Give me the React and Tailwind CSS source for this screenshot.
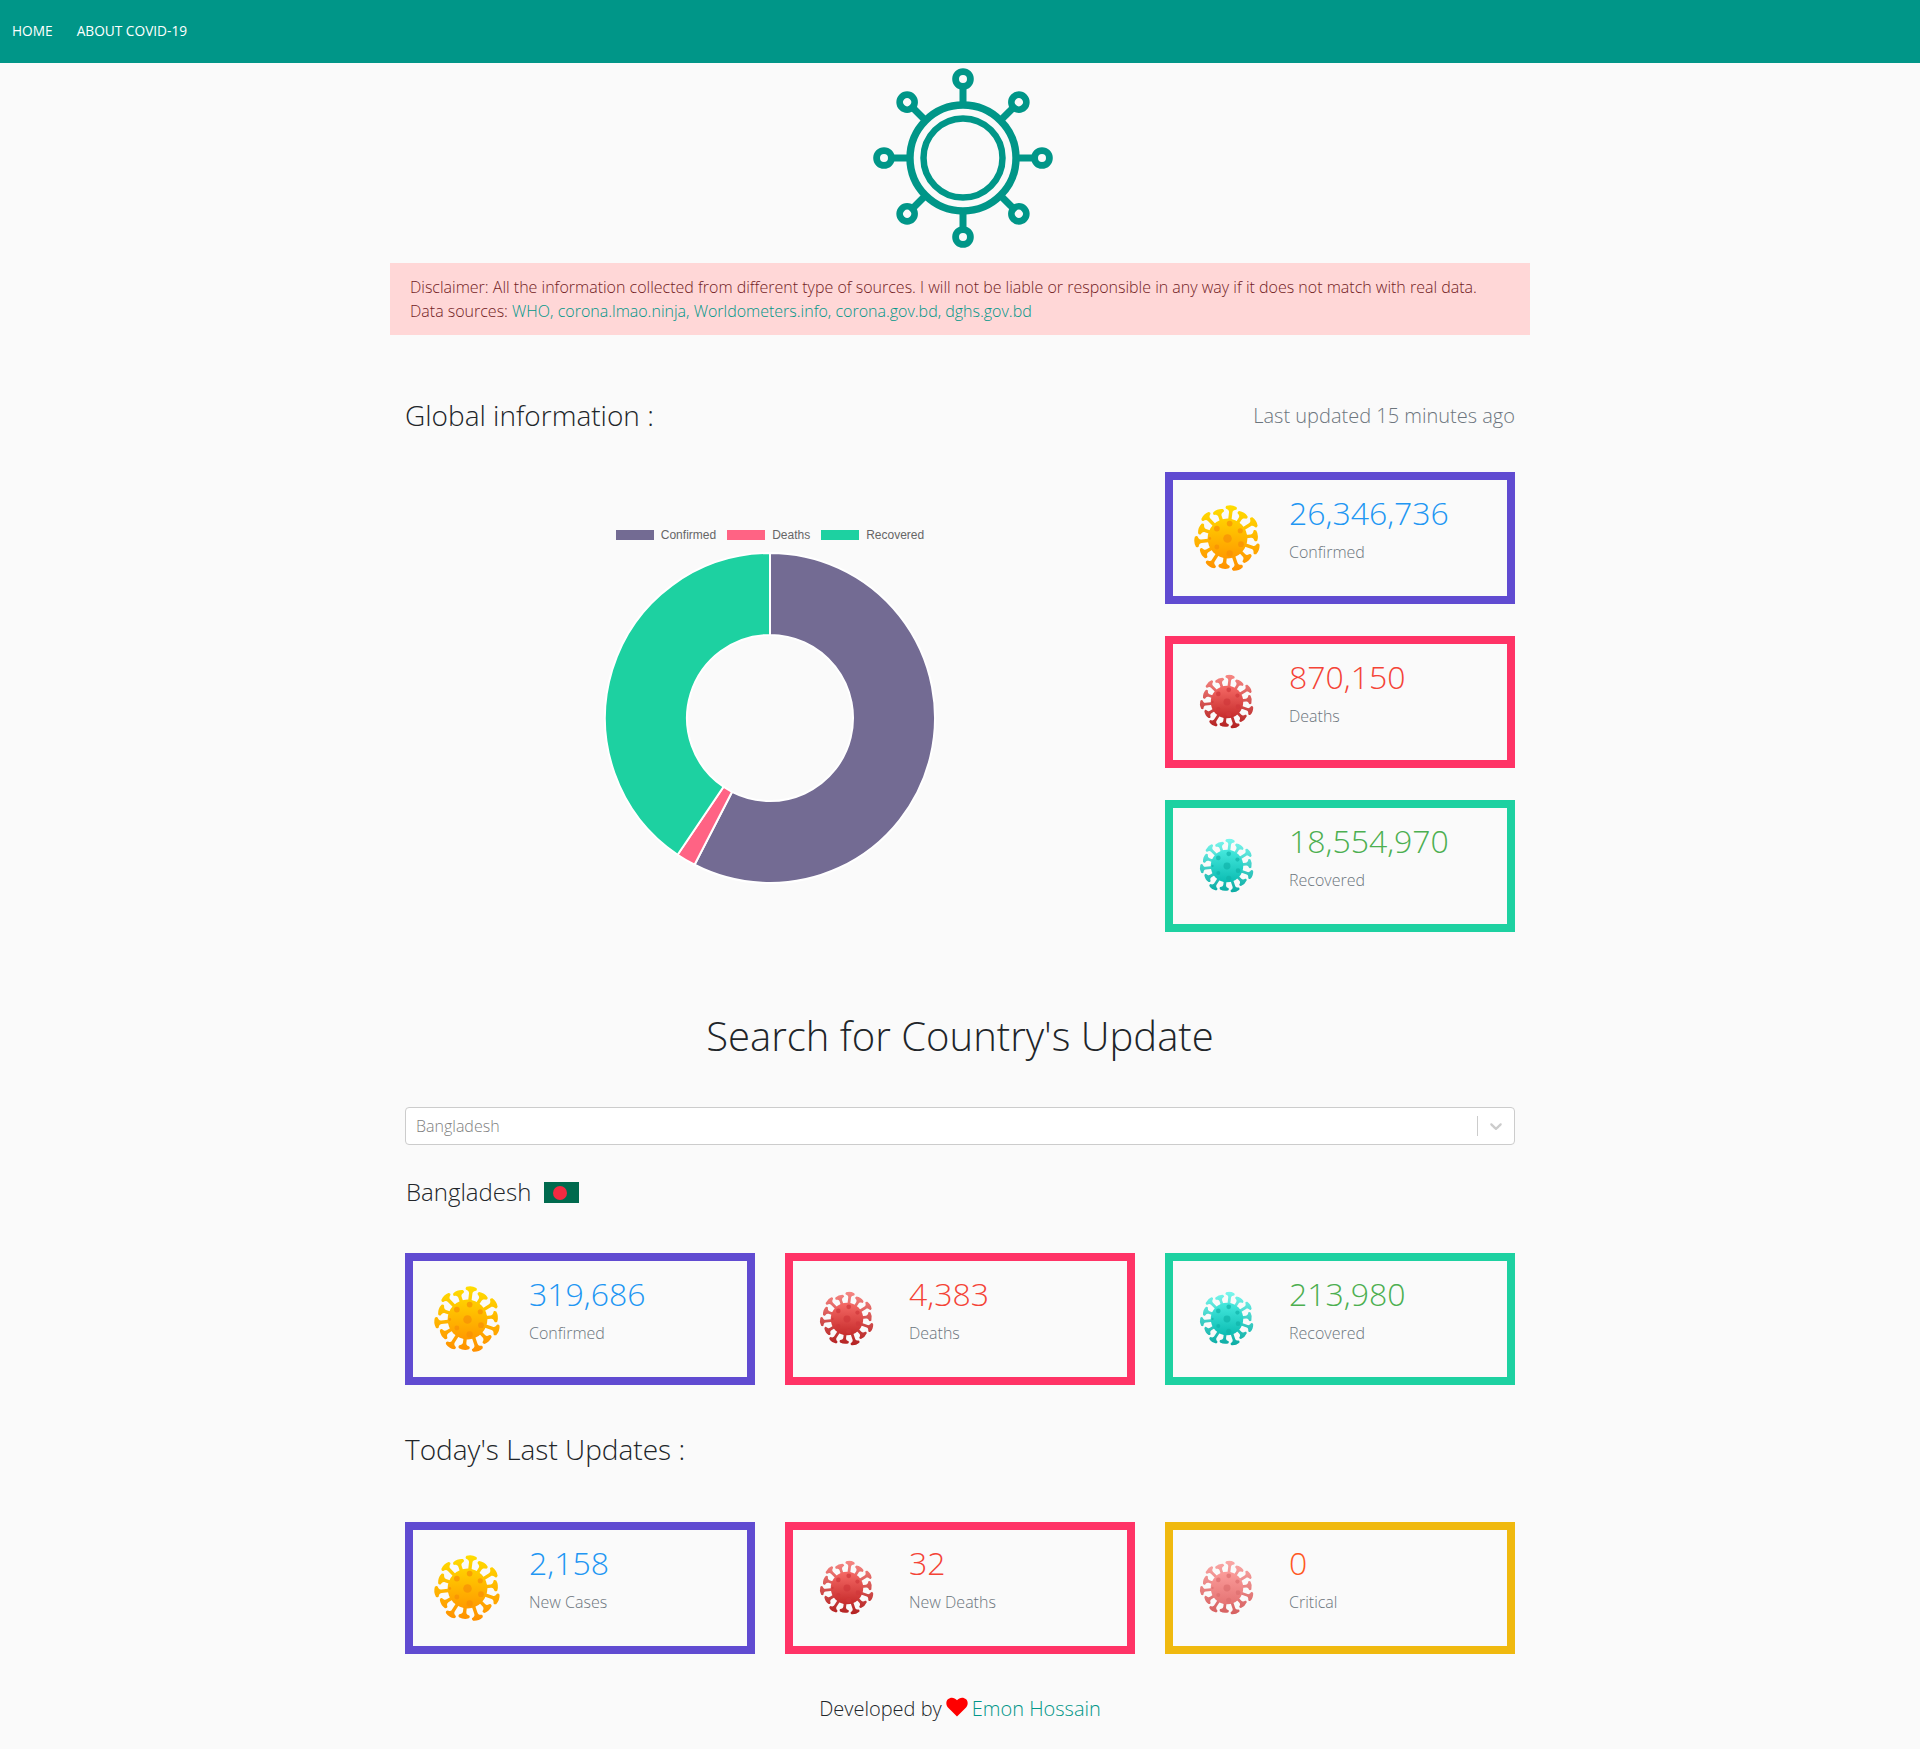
const OPEN = "font-['Open_Sans',sans-serif]";

const PALETTES = {
  yellow: { top: "#ffe000", bottom: "#ff8c00", spot: "#f78f05", body0: "#ffd000", body1: "#ff9a00" },
  red: { top: "#f98a86", bottom: "#b01c1c", spot: "#d0383a", body0: "#f56a66", body1: "#c62b2b" },
  teal: { top: "#7dfaf0", bottom: "#05a8a0", spot: "#10b3a9", body0: "#45e8dd", body1: "#0cbdb3" },
  pink: { top: "#fcaaa8", bottom: "#d45c5c", spot: "#dd6e6e", body0: "#fb9c9a", body1: "#e57373" },
};

const SPIKES = Array.from({ length: 14 }, (_, i) => (i * 360) / 14 + 7);
const SPOTS = [
  [50, 50, 6], [35, 36, 4], [53, 29, 4], [68, 39, 3.6], [69, 58, 4],
  [53, 71, 4.4], [35, 62, 3.4], [25, 50, 2],
];

function Virus({ tone, size }) {
  const p = PALETTES[tone];
  const id = `virus-${tone}-${size}`;
  return (
    <svg width={size} height={size} viewBox="0 0 100 100" className="block shrink-0">
      <defs>
        <linearGradient id={id} x1="0" y1="0" x2="0" y2="1">
          <stop offset="0" stopColor={p.top} />
          <stop offset="1" stopColor={p.bottom} />
        </linearGradient>
        <linearGradient id={`${id}-body`} x1="0" y1="0" x2="0" y2="1">
          <stop offset="0" stopColor={p.body0} />
          <stop offset="1" stopColor={p.body1} />
        </linearGradient>
        {/* spikes clip one upright gradient, so the shade doesn't turn with them */}
        <clipPath id={`${id}-spikes`}>
          {SPIKES.map((a, i) => {
            const y = i % 2 ? 7 : 3;
            return (
              <path
                key={a}
                transform={`rotate(${a} 50 50)`}
                d={`M47.6 26V${y + 10}C47.6 ${y + 7} 45 ${y + 6} 43 ${y + 5.5}Q41 ${y + 4} 43 ${y + 1.5}Q50 ${y - 1.5} 57 ${y + 1.5}Q59 ${y + 4} 57 ${y + 5.5}C55 ${y + 6} 52.4 ${y + 7} 52.4 ${y + 10}V26Z`}
              />
            );
          })}
        </clipPath>
      </defs>
      <rect width="100" height="100" fill={`url(#${id})`} clipPath={`url(#${id}-spikes)`} />
      <circle cx="50" cy="50" r="28" fill={`url(#${id}-body)`} />
      {SPOTS.map(([x, y, r]) => (
        <circle key={`${x}-${y}`} cx={x} cy={y} r={r} fill={p.spot} opacity="0.7" />
      ))}
    </svg>
  );
}

function StatCard({ border, tone, big, value, color, label }) {
  return (
    <div className={`flex h-[132px] w-[350px] border-8 ${border}`}>
      <div className="flex w-[108px] shrink-0 items-center justify-center">
        <Virus tone={tone} size={big ? 71 : 58} />
      </div>
      <div className="ml-2 pt-[11px]">
        <div className={`text-[32px] leading-[44px] font-light ${color}`}>{value}</div>
        <div className="mt-[5px] text-base leading-6 font-light text-[#6c757d]">{label}</div>
      </div>
    </div>
  );
}

// slices of the doughnut, in degrees from 12 o'clock
function arc(a0, a1, r0 = 165, r1 = 83) {
  const pt = (a, r) => {
    const t = ((a - 90) * Math.PI) / 180;
    return `${170 + r * Math.cos(t)} ${170 + r * Math.sin(t)}`;
  };
  const large = a1 - a0 > 180 ? 1 : 0;
  return `M${pt(a0, r0)}A${r0} ${r0} 0 ${large} 1 ${pt(a1, r0)}L${pt(a1, r1)}A${r1} ${r1} 0 ${large} 0 ${pt(a0, r1)}Z`;
}

function Doughnut() {
  const slices = [
    { c: "#736b93", a: 0, b: 207.2 },
    { c: "#ff6384", a: 207.2, b: 214.05 },
    { c: "#1dd1a1", a: 214.05, b: 360 },
  ];
  return (
    <svg width="340" height="340" viewBox="0 0 340 340" className="block">
      {slices.map((s) => (
        <path key={s.c} d={arc(s.a, s.b)} fill={s.c} stroke="#fff" strokeWidth="2" />
      ))}
    </svg>
  );
}

function Legend() {
  const items = [
    ["Confirmed", "bg-[#736b93]"],
    ["Deaths", "bg-[#ff6384]"],
    ["Recovered", "bg-[#1dd1a1]"],
  ];
  return (
    <div className="flex justify-center gap-[11px] font-['Liberation_Sans',sans-serif] text-xs leading-[14px] text-[#666]">
      {items.map(([t, c]) => (
        <div key={t} className="flex items-center gap-[7px]">
          <span className={`h-[10px] w-[38px] ${c}`} />
          {t}
        </div>
      ))}
    </div>
  );
}

export default function App() {
  return (
    <div className={`min-h-[1749px] bg-[#fafafa] ${OPEN} text-[#212529]`}>
      <nav className="flex h-[63px] items-center gap-6 bg-[#009688] pb-[1px] pl-3 text-[13.7px] text-white">
        <a>HOME</a>
        <a>ABOUT COVID-19</a>
      </nav>

      <div className="mx-auto w-[1140px]">
        <svg width="180" height="180" viewBox="0 0 180 180" className="mx-auto mt-[5px] block translate-x-[3px]" fill="none" stroke="#009688">
          <circle cx="90" cy="90" r="53" strokeWidth="7.4" />
          <circle cx="90" cy="90" r="39.5" strokeWidth="6.5" />
          {[0, 45, 90, 135, 180, 225, 270, 315].map((a) => (
            <g key={a} transform={`rotate(${a} 90 90)`}>
              <path d="M90 36V19" strokeWidth="7" />
              <circle cx="90" cy="11" r="7.4" strokeWidth="6.8" fill="#fafafa" />
            </g>
          ))}
        </svg>

        <div className="mt-[15px] h-[72px] bg-[#ffd7d7] px-5 py-3 text-base leading-6 font-light text-[#721c24]">
          <p>Disclaimer: All the information collected from different type of sources. I will not be liable or responsible in any way if it does not match with real data.</p>
          <p>
            Data sources: <span className="text-[#009688]">WHO, corona.lmao.ninja, Worldometers.info, corona.gov.bd, dghs.gov.bd</span>
          </p>
        </div>

        <div className="px-[15px]">
          <div className="mt-[60px] flex h-[42px] items-center justify-between">
            <h2 className="-mt-[2px] text-[28px] font-light text-[#212529]">Global information :</h2>
            <span className="text-xl font-light text-[#6c757d]">Last updated 15 minutes ago</span>
          </div>

          <div className="mt-[35px] flex justify-between">
            <div className="w-[730px] pt-[56px] pl-[30px]">
              <div className="w-[670px]">
                <Legend />
                <div className="mt-[6px] flex justify-center">
                  <Doughnut />
                </div>
              </div>
            </div>
            <div className="flex flex-col gap-8">
              <StatCard border="border-[#604bd1]" tone="yellow" big value="26,346,736" color="text-[#2196f3]" label="Confirmed" />
              <StatCard border="border-[#ff3366]" tone="red" value="870,150" color="text-[#f44336]" label="Deaths" />
              <StatCard border="border-[#1dd1a1]" tone="teal" value="18,554,970" color="text-[#4caf50]" label="Recovered" />
            </div>
          </div>

          <h1 className="mt-[74px] text-center text-[40px] leading-[60px] font-light text-[#212529]">Search for Country's Update</h1>

          <div className="mt-[41px] flex h-[38px] items-center rounded-[4px] border border-[#cccccc] bg-white pl-[10px] text-base font-light text-[#808080]">
            <span className="flex-1">Bangladesh</span>
            <span className="h-5 w-px bg-[#cccccc]" />
            <svg width="20" height="20" viewBox="0 0 20 20" className="mx-2 text-[#cccccc]" fill="currentColor">
              <path d="M4.516 7.548c0.436-0.446 1.043-0.481 1.576 0l3.908 3.747 3.908-3.747c0.533-0.481 1.141-0.446 1.574 0 0.436 0.445 0.408 1.197 0 1.615-0.406 0.418-4.695 4.502-4.695 4.502-0.217 0.223-0.502 0.335-0.787 0.335s-0.57-0.112-0.789-0.335c0 0-4.287-4.084-4.695-4.502s-0.436-1.17 0-1.615z" />
            </svg>
          </div>

          <div className="mt-[26px] flex h-[42px] items-center gap-[13px] pl-[1px]">
            <span className="text-2xl font-light text-[#212529]">Bangladesh</span>
            <span className="mt-[1px] flex h-[21px] w-[35px] items-center justify-center bg-[#006a4e] pr-1">
              <span className="h-[14px] w-[14px] rounded-full bg-[#f42a41]" />
            </span>
          </div>

          <div className="mt-[40px] flex justify-between">
            <StatCard border="border-[#604bd1]" tone="yellow" big value="319,686" color="text-[#2196f3]" label="Confirmed" />
            <StatCard border="border-[#ff3366]" tone="red" value="4,383" color="text-[#f44336]" label="Deaths" />
            <StatCard border="border-[#1dd1a1]" tone="teal" value="213,980" color="text-[#4caf50]" label="Recovered" />
          </div>

          <h2 className="mt-[43px] text-[28px] leading-[42px] font-light text-[#212529]">Today's Last Updates :</h2>

          <div className="mt-[52px] flex justify-between">
            <StatCard border="border-[#604bd1]" tone="yellow" big value="2,158" color="text-[#2196f3]" label="New Cases" />
            <StatCard border="border-[#ff3366]" tone="red" value="32" color="text-[#f44336]" label="New Deaths" />
            <StatCard border="border-[#f0b90f]" tone="pink" value="0" color="text-[#ff5722]" label="Critical" />
          </div>

          <div className="mt-[40px] flex items-center justify-center gap-[4px] text-xl leading-[30px] font-light text-[#212529]">
            <span>Developed by</span>
            <svg width="22" height="20" viewBox="0 0 24 22" className="-mt-[5px]" fill="#ff0000">
              <path d="M12 21.5 2.6 12.2C-.4 9.2-.4 5 2 2.6 4.7-.1 9.2.1 12 3.6 14.8.1 19.3-.1 22 2.6c2.4 2.4 2.4 6.6-.6 9.6z" />
            </svg>
            <span className="text-[#009688]">Emon Hossain</span>
          </div>
        </div>
      </div>
    </div>
  );
}
